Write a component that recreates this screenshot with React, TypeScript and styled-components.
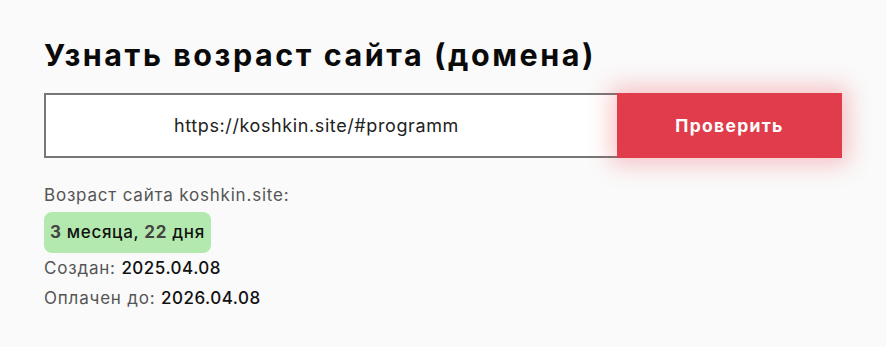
import React, { FC } from 'react';
import styled, { createGlobalStyle } from 'styled-components';

const GlobalStyle = createGlobalStyle`
  html, body {
    margin: 0;
    padding: 0;
    background: #fafafa;
  }
  body {
    font-family: Inter, "Noto Sans", sans-serif;
    color: #111;
  }
`;

const Page = styled.div`
  width: 886px;
  height: 347px;
  padding: 36px 44px 0;
  box-sizing: border-box;
`;

const Title = styled.h1`
  margin: 0;
  font-size: 30.5px;
  line-height: 38px;
  font-weight: 700;
  color: #0a0a0a;
  letter-spacing: 2.55px;
`;

const Form = styled.form`
  display: flex;
  margin-top: 19px;
  width: 798px;
  height: 65px;
`;

const UrlInput = styled.input`
  flex: 1;
  min-width: 0;
  height: 100%;
  box-sizing: border-box;
  border: 2px solid #777;
  border-right: none;
  padding: 0 30px 0 0;
  background: #fff;
  text-align: center;
  font-family: inherit;
  font-size: 18px;
  letter-spacing: 0.6px;
  color: #222;
  outline: none;
`;

const Button = styled.button`
  width: 225px;
  height: 100%;
  border: none;
  background: #e03c4b;
  color: #fff;
  font-family: inherit;
  font-size: 17.5px;
  font-weight: 700;
  letter-spacing: 1.3px;
  box-shadow: 0 0 22px 6px rgba(240, 60, 70, 0.3);
  cursor: pointer;
`;

const Result = styled.div`
  display: flex;
  flex-direction: column;
  align-items: flex-start;
  margin-top: 22px;
`;

const Line = styled.div`
  font-size: 17px;
  line-height: 30px;
  letter-spacing: 0.8px;
  color: #555;
`;

const Value = styled.span`
  color: #111;
  font-size: 17px;
  font-weight: 500;
  letter-spacing: 0.5px;
`;

const Badge = styled.div`
  background: #b3e9ae;
  border-radius: 8px;
  padding: 0 6px;
  height: 41px;
  line-height: 41px;
  font-size: 17px;
  font-weight: 500;
  letter-spacing: 0.65px;
  color: #111;
  margin: 2px 0 0;
`;

const Num = styled.b`
  color: #444;
  font-weight: 700;
`;

const App: FC = () => {
  return (
    <Page>
      <GlobalStyle />
      <Title>Узнать возраст сайта (домена)</Title>
      <Form onSubmit={(e) => e.preventDefault()}>
        <UrlInput defaultValue='https://koshkin.site/#programm' />
        <Button type='submit'>Проверить</Button>
      </Form>
      <Result>
        <Line>Возраст сайта koshkin.site:</Line>
        <Badge>
          <Num>3</Num> месяца, <Num>22</Num> дня
        </Badge>
        <Line>
          Создан: <Value>2025.04.08</Value>
        </Line>
        <Line>
          Оплачен до: <Value>2026.04.08</Value>
        </Line>
      </Result>
    </Page>
  );
};

export default App;
